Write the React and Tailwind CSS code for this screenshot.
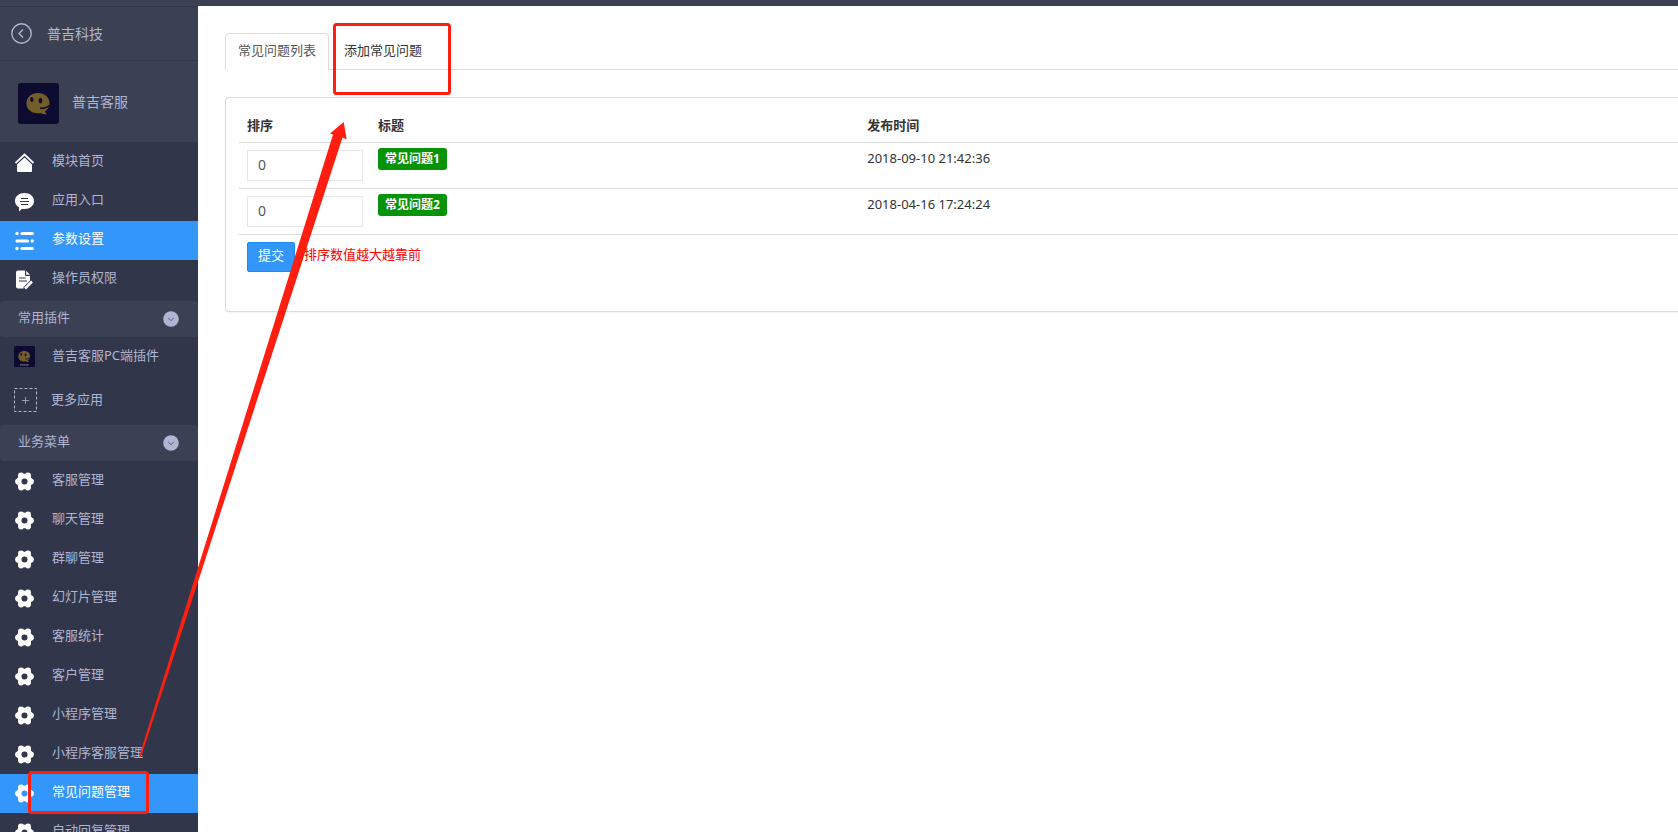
import React from 'react';

const mainMenu = [
  { name: '模块首页', icon: 'home' },
  { name: '应用入口', icon: 'chat' },
  { name: '参数设置', icon: 'params', active: true },
  { name: '操作员权限', icon: 'doc' },
];

const businessMenu = [
  '客服管理',
  '聊天管理',
  '群聊管理',
  '幻灯片管理',
  '客服统计',
  '客户管理',
  '小程序管理',
  '小程序客服管理',
  '常见问题管理',
  '自动回复管理',
];

const questions = [
  { id: 1, sort: 0, title: '常见问题1', time: '2018-09-10 21:42:36' },
  { id: 2, sort: 0, title: '常见问题2', time: '2018-04-16 17:24:24' },
];

const icons = {
  home: (
    <>
      <path d="M0.5 10 L9.5 1.5 L18.5 10" fill="none" stroke="#fff" strokeWidth="1.8" />
      <path d="M9.5 4.5 L17 11.5 V18 a1 1 0 0 1 -1 1 H3 a1 1 0 0 1 -1 -1 V11.5 Z" fill="#fff" />
    </>
  ),
  chat: (
    <>
      <path d="M9.5 1 C15 1 19 4.5 19 9 C19 13.5 15 17 9.5 17 C8.6 17 7.8 17 7 16.7 L4 19.5 V15.3 C1.6 14 0 11.7 0 9 C0 4.5 4 1 9.5 1 Z" fill="#fff" />
      <path d="M6 6.5 H13 M5 9.5 H14 M6 12.5 H13" stroke="#32364a" strokeWidth="1" />
    </>
  ),
  params: (
    <>
      <path d="M7 2.5 H17.3 M2 10 H12.5 M7 17.5 H17.3" stroke="#fff" strokeWidth="3.2" strokeLinecap="round" />
      <circle cx="2" cy="2.5" r="1.7" fill="#fff" />
      <circle cx="17.2" cy="10" r="1.7" fill="#fff" />
      <circle cx="2" cy="17.5" r="1.7" fill="#fff" />
    </>
  ),
  doc: (
    <>
      <path d="M3 0.5 H10 V5 a1 1 0 0 0 1 1 H15 V10.5 L8.5 17 V18.5 H3 a2 2 0 0 1 -2 -2 V2.5 a2 2 0 0 1 2 -2 Z" fill="#fff" />
      <path d="M11.2 0.8 L15 4.8 H11.2 Z" fill="#fff" />
      <path d="M4 8 H10.5 M4 11 H12" stroke="#32364a" strokeWidth="1" />
      <path d="M10 18.5 L17 11.5" stroke="#fff" strokeWidth="2.6" />
    </>
  ),
};

const Gear = ({ hole }) => (
  <>
    <g fill="#fff">
      <circle cx="9.5" cy="9.5" r="7.8" />
      <circle cx="3.2" cy="9.5" r="3.1" />
      <circle cx="15.8" cy="9.5" r="3.1" />
      <circle cx="6.1" cy="3.7" r="3.1" />
      <circle cx="12.9" cy="3.7" r="3.1" />
      <circle cx="6.1" cy="15.3" r="3.1" />
      <circle cx="12.9" cy="15.3" r="3.1" />
    </g>
    <circle cx="9.5" cy="9.5" r="3" fill={hole} />
  </>
);

const Logo = ({ className, small }) => (
  <svg className={className} viewBox="0 0 41 41" aria-hidden="true">
    <rect width="41" height="41" rx="3" fill="#0d0b30" />
    <path
      d="M20 10 C27 10 31.5 14.5 31.5 20 C31.5 22 31 24 29.5 26 C28 28 27 28 27 28.5 C27 29.5 28 30.5 29.5 31 C26.5 31.5 24 31 22.5 30 C14 31.5 8.5 26.5 8.5 20.5 C8.5 14.5 13 10 20 10 Z"
      fill="#735d2b"
    />
    <ellipse cx="13.8" cy="16.5" rx="1.6" ry="2.6" fill="#0d0b30" />
    <ellipse cx="22.5" cy="17.5" rx="1.8" ry="2.8" fill="#0d0b30" />
    <path d="M22 25 C25.5 26 28.5 25 31 22.5" fill="none" stroke="#0d0b30" strokeWidth="1.6" />
    {small && <path d="M12 37 H29" stroke="#8c8798" strokeWidth="2.4" strokeDasharray="3 1" />}
  </svg>
);

const MenuItem = ({ name, active, children }) => (
  <li>
    <a
      href="#"
      className={`flex h-[39px] items-center pb-[5px] pl-[15px] text-[13px] ${
        active ? 'bg-[#3296fa] text-white' : 'text-[#afb5d2]'
      }`}
    >
      <svg className="mt-[5px] h-5 w-5 shrink-0" viewBox="0 0 20 20" aria-hidden="true">
        {children}
      </svg>
      <span className="ml-[17px] leading-5">{name}</span>
    </a>
  </li>
);

const SectionTitle = ({ name }) => (
  <button type="button" className="flex h-9 w-full items-center justify-between rounded bg-[#3c4053] pr-[19px] pb-1 pl-[18px] text-[13px] text-[#afb5d2]">
    <span className="leading-5">{name}</span>
    <svg className="mt-1 h-4 w-4" viewBox="0 0 16 16" aria-hidden="true">
      <circle cx="8" cy="8" r="7.8" fill="#afb5d2" />
      <path d="M5.2 7 L8 9.6 L10.8 7" fill="none" stroke="#5a5f7a" strokeWidth="1" />
    </svg>
  </button>
);

const Sidebar = () => (
  <aside className="w-[198px] shrink-0 bg-[#32364a]">
    <a href="#" className="flex h-[55px] items-center border-y border-[#32364a] bg-[#3c4053] pl-[11px] text-sm text-[#afb5d2]">
      <svg className="h-[21px] w-[21px]" viewBox="0 0 21 21" fill="none" stroke="#afb5d2" aria-hidden="true">
        <circle cx="10.5" cy="10.5" r="9.7" strokeWidth="1.4" />
        <path d="M12 6.5 L8 10.5 L12 14.5" strokeWidth="1.4" />
      </svg>
      <span className="ml-[15px]">普吉科技</span>
    </a>
    <div className="flex h-[81px] items-center bg-[#3c4053] pl-[18px] text-sm text-[#afb5d2]">
      <Logo className="mt-1 h-[41px] w-[41px]" />
      <span className="ml-[13px]">普吉客服</span>
    </div>
    <ul className="pt-px pb-[2px]">
      {mainMenu.map((item) => (
        <MenuItem key={item.name} name={item.name} active={item.active}>
          {icons[item.icon]}
        </MenuItem>
      ))}
    </ul>
    <SectionTitle name="常用插件" />
    <a href="#" className="flex h-10 items-center pb-[5px] pl-[14px] text-[13px] text-[#afb5d2]">
      <Logo small className="mt-1 h-[21px] w-[21px]" />
      <span className="ml-[17px] leading-5">普吉客服PC端插件</span>
    </a>
    <a href="#" className="flex h-12 items-center pb-1 pl-[14px] text-[13px] text-[#afb5d2]">
      <svg className="mt-[2px] h-6 w-[23px]" viewBox="0 0 23 24" fill="none" stroke="#afb5d2" aria-hidden="true">
        <rect x="0.5" y="0.5" width="22" height="23" strokeDasharray="3 2" />
        <path d="M11.5 9 V16 M8 12.5 H15" strokeOpacity="0.8" />
      </svg>
      <span className="ml-[14px] leading-5">更多应用</span>
    </a>
    <SectionTitle name="业务菜单" />
    <ul className="pt-px">
      {businessMenu.map((name) => {
        const active = name === '常见问题管理';
        return (
          <MenuItem key={name} name={name} active={active}>
            <Gear hole={active ? '#3296fa' : '#32364a'} />
          </MenuItem>
        );
      })}
    </ul>
  </aside>
);

const QuestionTable = () => (
  <form className="rounded-l border border-r-0 border-[#ddd] pt-3 pb-[39px] pl-[13px] shadow-xs" onSubmit={(e) => e.preventDefault()}>
    <table className="w-full table-fixed text-left text-[13px] leading-5 text-[#333]">
      <thead>
        <tr className="h-8 border-b border-[#ddd]">
          <th className="w-[131px] px-2 pb-[2px] font-bold">排序</th>
          <th className="w-[34%] px-2 pb-[2px] font-bold">标题</th>
          <th className="px-2 pb-[2px] font-bold">发布时间</th>
        </tr>
      </thead>
      <tbody>
        {questions.map((q) => (
          <tr key={q.id} className="h-[46px] border-b border-[#ddd] align-top">
            <td className="pt-[7px] pr-[7px] pl-2">
              <input
                type="text"
                aria-label={`排序 ${q.title}`}
                defaultValue={q.sort}
                className="block h-[31px] w-full border border-[#e7e7eb] px-[10px] pb-px text-sm text-[#555]"
              />
            </td>
            <td className="px-2 pt-[5px]">
              <span className="inline-block rounded-[3px] bg-[#079307] px-[7px] text-xs leading-[22px] font-bold text-white">{q.title}</span>
            </td>
            <td className="px-2 pt-[5px]">{q.time}</td>
          </tr>
        ))}
      </tbody>
    </table>
    <div className="flex items-start gap-[9px] pt-[7px] pl-2 text-[13px]">
      <button type="submit" className="h-[30px] rounded-xs border border-[#1b89fa] bg-[#3296fa] px-[10px] pb-px text-white">
        提交
      </button>
      <span className="pt-[2px] leading-5 text-[#f00]">排序数值越大越靠前</span>
    </div>
  </form>
);

const App = () => (
  <div className="relative flex h-screen flex-col overflow-hidden bg-white font-['Noto_Sans','Noto_Sans_CJK_SC',sans-serif]">
    <header className="h-[6px] shrink-0 bg-[#3c4053]" />
    <div className="flex min-h-0 flex-1">
      <Sidebar />
      <main className="min-w-0 flex-1 pt-[27px] pl-[27px]">
        <nav className="mb-[27px] flex gap-[2px] border-b border-[#ddd] text-[13px] leading-5">
          <a href="#" className="-mb-px rounded-t border border-b-0 border-[#ddd] bg-white px-3 pt-[6px] pb-[10px] text-[#555]">
            常见问题列表
          </a>
          <a href="#" className="px-[13px] pt-[7px] pb-[9px] text-[#333]">添加常见问题</a>
        </nav>
        <QuestionTable />
      </main>
    </div>
    <svg className="pointer-events-none absolute top-0 left-0 h-[832px] w-[460px]" viewBox="0 0 460 832" aria-hidden="true">
      <g fill="none" stroke="#ff1e10" strokeWidth="3">
        <rect x="334.5" y="24.5" width="115" height="69" rx="2" />
        <rect x="29.5" y="772.5" width="118" height="40" rx="2" />
      </g>
      <path d="M139 757 L333 134.5 L330 133.5 L343.7 122 L346.7 139.5 L342.5 137.5 L141 757 Z" fill="#ff1e10" />
    </svg>
  </div>
);

export default App;
